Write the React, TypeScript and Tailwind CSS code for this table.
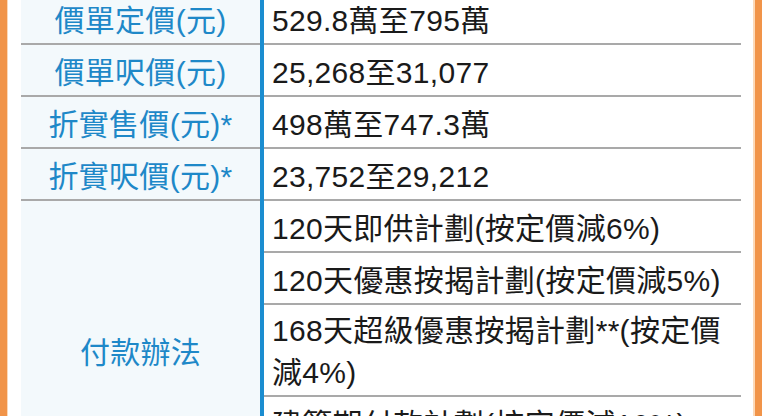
const priceRows = [
  { label: "價單定價(元)", value: "529.8萬至795萬" },
  { label: "價單呎價(元)", value: "25,268至31,077" },
  { label: "折實售價(元)*", value: "498萬至747.3萬" },
  { label: "折實呎價(元)*", value: "23,752至29,212" },
];

const paymentRows = [
  { value: "120天即供計劃(按定價減6%)", double: false },
  { value: "120天優惠按揭計劃(按定價減5%)", double: false },
  { value: "168天超級優惠按揭計劃**(按定價減4%)", double: true },
  { value: "建築期付款計劃(按定價減10%)", double: false },
];

export default function App() {
  return (
    <div className="flex h-[416px] overflow-hidden bg-white font-['Liberation_Sans','Noto_Sans_CJK_TC',sans-serif] text-[30px]">
      <div className="w-[7px] shrink-0 bg-[#f19449]" />
      <div className="w-px shrink-0 bg-[#fcd9b8]" />
      <div className="w-[13px] shrink-0" />

      <div className="w-[720px] shrink-0">
        <div className="-mt-[7px] grid grid-cols-[239px_4px_1fr] grid-rows-[repeat(8,auto)]">
          {/* continuous blue divider */}
          <div className="col-start-2 row-span-full row-start-1 bg-[#1b8dd0]" />

          {priceRows.map((row, i) => (
            <div key={row.label} className="contents">
              <div
                className="col-start-1 flex items-center justify-center border-b-2 border-[#a9a9a9] bg-[#f3f9fc] pt-[7px] pb-px leading-[42px] tracking-[0.3px] text-[#1e88c8]"
                style={{ gridRow: i + 1 }}
              >
                {row.label}
              </div>
              <div
                className="col-start-3 border-b-2 border-[#a9a9a9] pt-[7px] pb-px pl-[8px] pr-[8px] leading-[42px] tracking-[0.3px] text-[#1a1a1a]"
                style={{ gridRow: i + 1 }}
              >
                {row.value}
              </div>
            </div>
          ))}

          <div className="col-start-1 row-span-4 row-start-5 flex items-center justify-center border-b-2 border-[#a9a9a9] bg-[#f3f9fc] pt-[58px] leading-[42px] tracking-[0.3px] text-[#1e88c8]">
            付款辦法
          </div>

          {paymentRows.map((row, i) => (
            <div
              key={row.value}
              className={
                row.double
                  ? "col-start-3 border-b-2 border-[#a9a9a9] pt-[5px] pb-px pl-[8px] pr-[8px] leading-[42px] tracking-[0.3px] text-[#1a1a1a]"
                  : "col-start-3 border-b-2 border-[#a9a9a9] pt-[7px] pb-px pl-[8px] pr-[8px] leading-[42px] tracking-[0.3px] text-[#1a1a1a]"
              }
              style={{ gridRow: i + 5 }}
            >
              {row.value}
            </div>
          ))}
        </div>
      </div>

      <div className="w-[12px] shrink-0" />
      <div className="w-[2px] shrink-0 bg-[#fcd9b8]" />
      <div className="w-[7px] shrink-0 bg-[#f19449]" />
    </div>
  );
}
